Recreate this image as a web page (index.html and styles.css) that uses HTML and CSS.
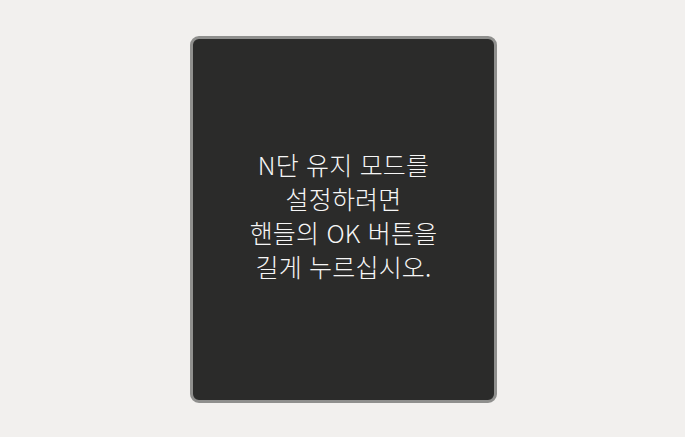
FILE: index.html
```html
<!DOCTYPE html>
<html lang="ko">
<head>
<meta charset="utf-8">
<link rel="stylesheet" href="styles.css">
</head>
<body>
<div class="stage">
  <div class="card">
    <p class="msg">N단 유지 모드를<br>설정하려면<br>핸들의 OK 버튼을<br>길게 누르십시오.</p>
  </div>
</div>
</body>
</html>
```
FILE: styles.css
```css
html, body {
  margin: 0;
  padding: 0;
  background: #f2f0ee;
}
.stage {
  width: 685px;
  height: 437px;
  display: flex;
  justify-content: center;
  align-items: flex-start;
  padding-top: 36px;
  box-sizing: border-box;
}
.card {
  width: 307px;
  height: 367px;
  box-sizing: border-box;
  border: 3px solid #8f8f8d;
  border-radius: 9px;
  background: #2b2b2a;
  display: flex;
  align-items: center;
  justify-content: center;
  margin-left: 2px;
}
.msg {
  margin: 0 0 9px 0;
  color: #f6f6f6;
  font-family: "Noto Sans CJK KR", "Noto Sans", sans-serif;
  font-size: 25px;
  line-height: 34px;
  text-align: center;
  font-weight: 300;
  letter-spacing: 0.2px;
}
```
